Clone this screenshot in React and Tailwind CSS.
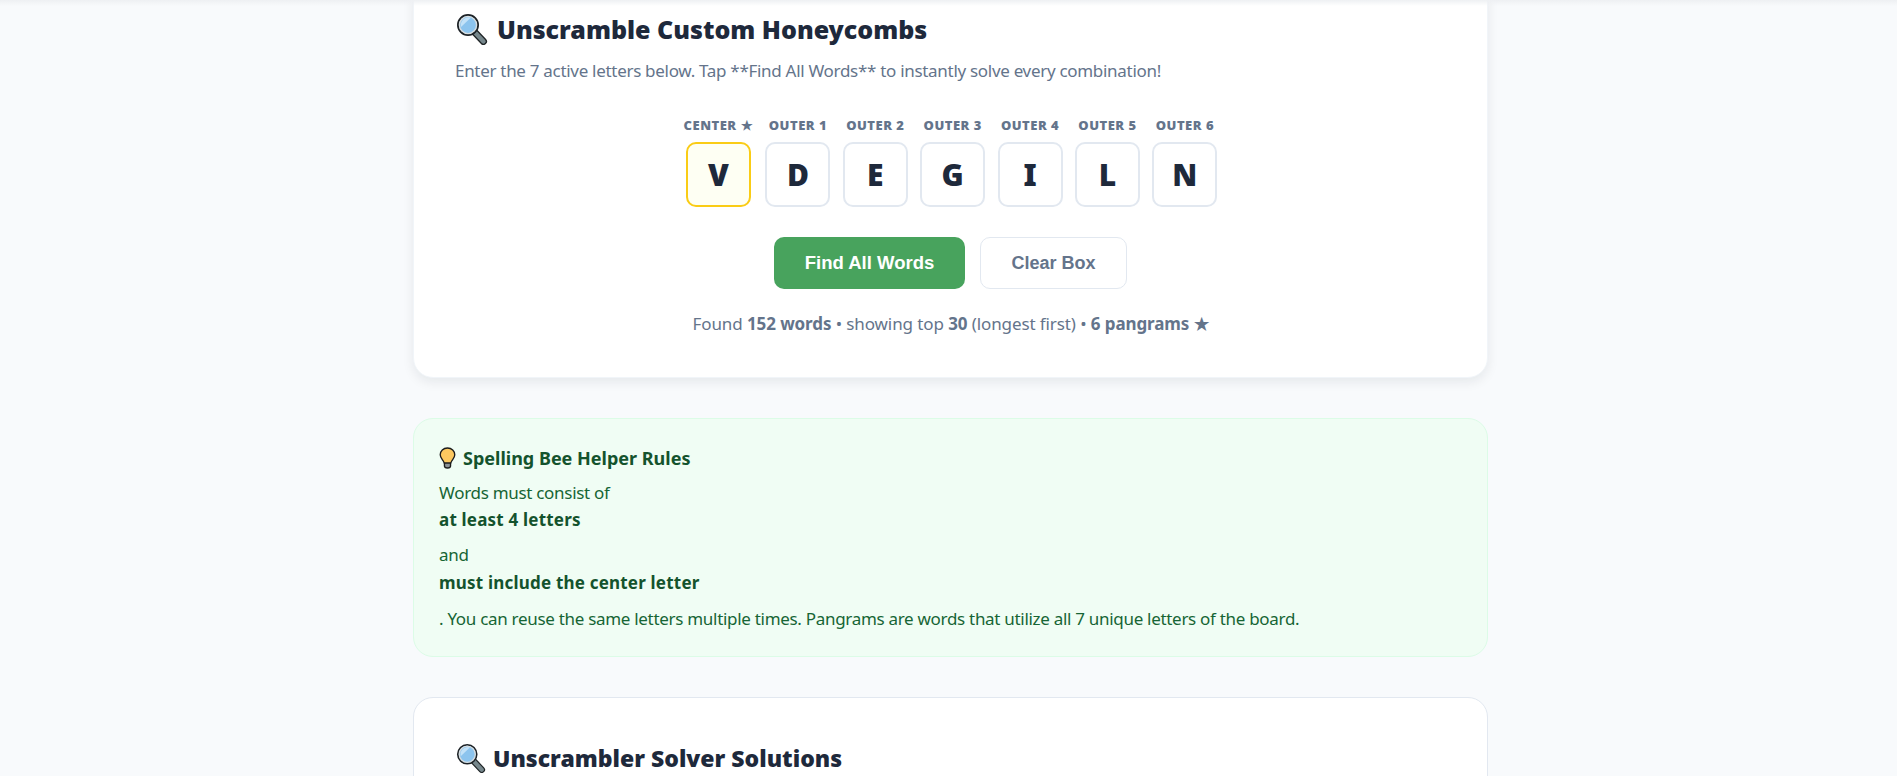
import React from 'react';

const font = { fontFamily: '"Noto Sans", sans-serif' };

const Magnifier = ({ className }) => (
    <svg viewBox="0 0 32 32" className={className}>
        <path d="M18.5 19 L27.5 28.5" stroke="#1f2426" strokeWidth="7" strokeLinecap="round" fill="none" />
        <path d="M19 19.5 L27.5 28.5" stroke="#76878c" strokeWidth="4.4" strokeLinecap="round" fill="none" />
        <circle cx="12" cy="12" r="10" fill="#8cc4ee" stroke="#1d2226" strokeWidth="2" />
        <path d="M5 14 A8 8 0 0 1 15 4.5 Z" fill="#c3e2f8" />
        <circle cx="12" cy="12" r="8.6" fill="none" stroke="#d6dde0" strokeWidth="1.4" />
    </svg>
);

const Bulb = ({ className }) => (
    <svg viewBox="0 0 20 26" className={className}>
        <path d="M10 1.2 C5 1.2 1.4 4.8 1.4 9.2 C1.4 13.4 5.2 15.2 6.2 19 H13.8 C14.8 15.2 18.6 13.4 18.6 9.2 C18.6 4.8 15 1.2 10 1.2 Z" fill="#fcc860" stroke="#1c1c1c" strokeWidth="1.6" />
        <path d="M6.4 19 H13.6 V22.6 C13.6 24 12 24.8 10 24.8 C8 24.8 6.4 24 6.4 22.6 Z" fill="#8c9296" stroke="#1c1c1c" strokeWidth="1.6" />
    </svg>
);

const LetterBox = ({ label, letter, center }) => (
    <div className="flex flex-col items-center">
        <span className="text-[13px] leading-[18px] font-black tracking-[0.5px] text-[#64748b] whitespace-nowrap">{label}</span>
        <div
            className={`mt-[8px] w-[65px] h-[65px] flex items-center justify-center rounded-[10px] border-[2.5px] text-[30px] font-black text-[#1e293b] ${
                center ? 'border-[#facc15] bg-[#fefff3]' : 'border-[#e2e8f0] bg-white'
            }`}
        >
            {letter}
        </div>
    </div>
);

const App = () => {
    const letters = [
        ['OUTER 1', 'D'],
        ['OUTER 2', 'E'],
        ['OUTER 3', 'G'],
        ['OUTER 4', 'I'],
        ['OUTER 5', 'L'],
        ['OUTER 6', 'N'],
    ];

    return (
        <div className="relative h-[776px] overflow-hidden bg-[#f8fafc]" style={font}>
            <div className="absolute top-0 left-0 right-0 h-[6px] bg-gradient-to-b from-[#eef0f3] to-transparent z-10" />

            <div className="w-[1075px] ml-[413px]">
                <section className="-mt-[20px] h-[398px] bg-white rounded-[20px] border border-[#f1f5f9] shadow-[0_4px_12px_rgba(15,23,42,0.08)] pt-[30px] px-[41px]">
                    <h2 className="flex items-center pl-[1px] text-[25px] leading-[36px] font-black text-[#1e293b]">
                        <Magnifier className="w-[32px] h-[32px] mr-[9px]" />
                        Unscramble Custom Honeycombs
                    </h2>
                    <p className="mt-[11px] text-[17px] leading-[26px] tracking-[-0.3px] text-[#64748b]">
                        Enter the 7 active letters below. Tap **Find All Words** to instantly solve every combination!
                    </p>

                    <div className="mt-[32px] flex justify-center gap-[12.4px]">
                        <LetterBox label="CENTER ★" letter="V" center />
                        {letters.map(([label, letter]) => (
                            <LetterBox key={label} label={label} letter={letter} />
                        ))}
                    </div>

                    <div className="mt-[30px] flex justify-center gap-[15px]" style={{ fontFamily: '"Liberation Sans", Arial, sans-serif' }}>
                        <button className="w-[191px] h-[52px] rounded-[10px] bg-[#48a35d] text-white text-[18.5px] font-bold">Find All Words</button>
                        <button className="w-[147px] h-[52px] rounded-[10px] border-[1.5px] border-[#e2e8f0] bg-white text-[#64748b] text-[18px] font-bold">Clear Box</button>
                    </div>

                    <p className="mt-[22px] text-center text-[17px] leading-[26px] tracking-[-0.1px] text-[#64748b]">
                        Found <strong className="font-bold">152 words</strong> • showing top <strong className="font-bold">30</strong> (longest first) • <strong className="font-bold">6 pangrams ★</strong>
                    </p>
                </section>

                <section className="mt-[40px] h-[239px] bg-[#f0fdf4] rounded-[20px] border border-[#dcfce7] pt-[25px] px-[25px] text-[#166534]">
                    <h4 className="flex items-center text-[18px] leading-[28px] font-bold text-[#14532d]">
                        <Bulb className="w-[17px] h-[22px] mr-[7px]" />
                        Spelling Bee Helper Rules
                    </h4>
                    <div className="mt-[7px] text-[17px] leading-[27px] tracking-[-0.3px]">
                        <div>Words must consist of</div>
                        <strong className="block font-bold tracking-[0.2px] text-[#14532d]">at least 4 letters</strong>
                        <div className="mt-[8px]">and</div>
                        <strong className="block mt-[1px] font-bold tracking-[0.2px] text-[#14532d]">must include the center letter</strong>
                        <div className="mt-[9px]">. You can reuse the same letters multiple times. Pangrams are words that utilize all 7 unique letters of the board.</div>
                    </div>
                </section>

                <section className="mt-[40px] h-[200px] bg-white rounded-[20px] border border-[#e2e8f0] pt-[43px] px-[41px]">
                    <h2 className="flex items-center pl-[1px] text-[23px] leading-[34px] font-black text-[#1e293b]">
                        <Magnifier className="w-[30px] h-[30px] mr-[7px]" />
                        Unscrambler Solver Solutions
                    </h2>
                </section>
            </div>
        </div>
    );
};

export default App;
